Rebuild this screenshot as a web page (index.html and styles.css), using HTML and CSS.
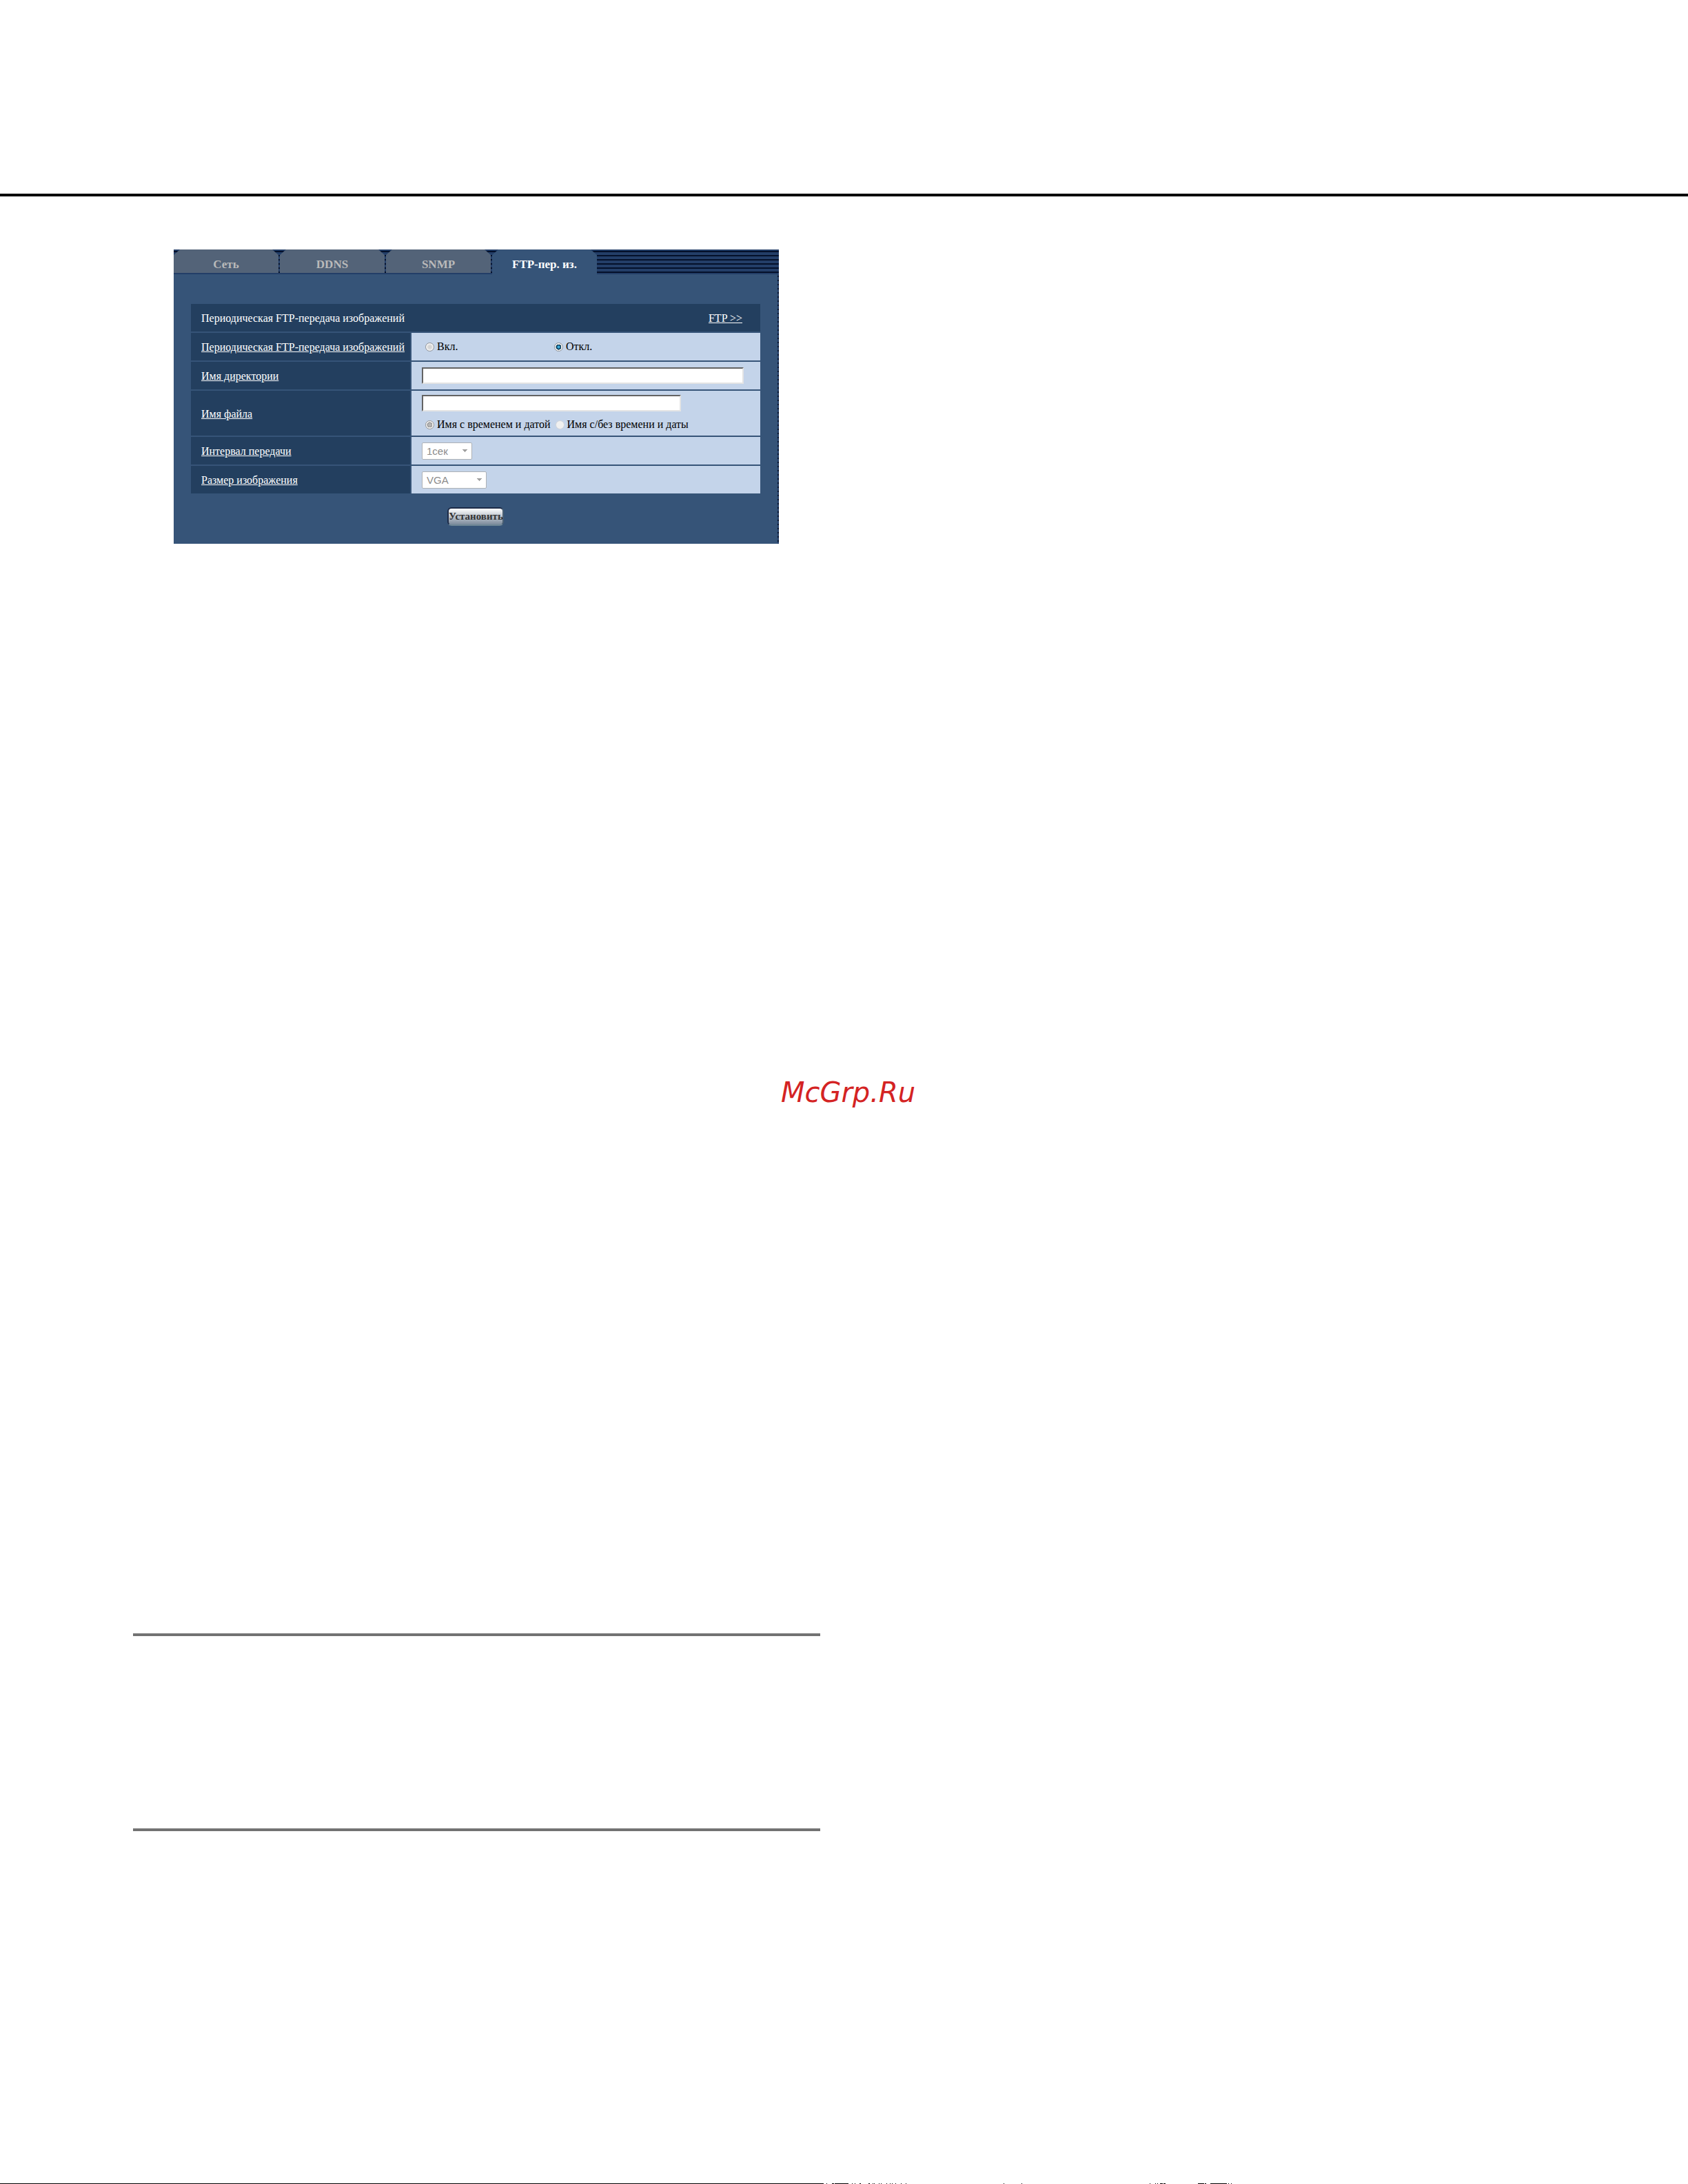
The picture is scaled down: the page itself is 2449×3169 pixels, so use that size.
FILE: index.html
```
<!DOCTYPE html>
<html lang="ru">
<head>
  <meta charset="UTF-8">
  <meta name="viewport" content="width=device-width, initial-scale=1.0">
  <title>FTP-пер. из.</title>
  <link rel="stylesheet" href="styles.css">
</head>
<body>
  <header class="page-head"></header>

  <main>
    <form class="panel">
      <nav class="tabs">
        <a class="tab" href="#net">Сеть</a>
        <a class="tab" href="#ddns">DDNS</a>
        <a class="tab" href="#snmp">SNMP</a>
        <a class="tab active" href="#ftp">FTP-пер. из.</a>
      </nav>

      <div class="panel-body">
        <table class="settings">
          <tr>
            <th colspan="2">
              <div class="caption">
                <span>Периодическая FTP-передача изображений</span>
                <a href="#ftp-setup">FTP &gt;&gt;</a>
              </div>
            </th>
          </tr>
          <tr>
            <th><a href="#help-ftp">Периодическая FTP-передача изображений</a></th>
            <td>
              <div class="radios wide">
                <label><input type="radio" name="ftp">Вкл.</label>
                <label><input type="radio" name="ftp" checked>Откл.</label>
              </div>
            </td>
          </tr>
          <tr>
            <th><a href="#help-dir">Имя директории</a></th>
            <td><input type="text" class="dir" aria-label="Имя директории"></td>
          </tr>
          <tr class="tall">
            <th><a href="#help-file">Имя файла</a></th>
            <td>
              <input type="text" class="file" aria-label="Имя файла">
              <div class="radios">
                <label><input type="radio" name="stamp" checked disabled>Имя с временем и датой</label>
                <label><input type="radio" name="stamp" disabled>Имя с/без времени и даты</label>
              </div>
            </td>
          </tr>
          <tr>
            <th><a href="#help-interval">Интервал передачи</a></th>
            <td><select class="interval" aria-label="Интервал передачи" disabled><option>1сек</option></select></td>
          </tr>
          <tr>
            <th><a href="#help-size">Размер изображения</a></th>
            <td><select class="size" aria-label="Размер изображения" disabled><option>VGA</option></select></td>
          </tr>
        </table>
        <button type="button" class="set">Установить</button>
      </div>
    </form>

    <p class="mark">McGrp.Ru</p>

    <section class="note"></section>
  </main>

  <footer class="page-foot">
    <svg width="1800" height="1" shape-rendering="crispEdges">
      <path stroke="#000" d="M0 .5H1195M1199 .5h1M1207 .5h3M1211 .5h20M1236 .5h1M1240 .5h1M1247 .5h2M1260 .5h2M1266 .5h1M1268 .5h1M1275 .5h1M1278 .5h1M1286 .5h1M1291 .5h1M1294 .5h1M1299 .5h1M1307 .5h1M1314 .5h1M1456 .5h1M1482 .5h1M1668 .5h1M1676 .5h1M1679 .5h1M1683 .5h4M1688 .5h3M1738 .5h9M1748 .5h2M1756 .5h24M1782 .5h1M1786 .5h1"/>
    </svg>
  </footer>
</body>
</html>
```
FILE: styles.css
```
* {
  box-sizing: border-box;
}
body {
  margin: 0;
  min-height: 100vh;
  display: flex;
  flex-direction: column;
  background: #fff;
  font: 16px/20px "Liberation Serif", "Times New Roman", serif;
}
.page-head {
  height: 285px;
  border-bottom: 4px solid #000;
}

/* settings panel, the stripes show behind the tabs and down the right edge */
.panel {
  width: 878px;
  max-width: 100%;
  margin: 77px 0 0 252px;
  padding-right: 2px;
  background: repeating-linear-gradient(#233e68 0 2px, #04102a 2px 4px, #233e68 4px 6px);
}
.tabs {
  display: flex;
  height: 36px;
  margin-right: -2px;
  border-bottom: 2px solid #233e68;
}
.tab {
  width: 152px;
  height: 34px;
  margin-right: 2px;
  background: #536378;
  clip-path: polygon(9px 0, 143px 0, 152px 8px, 152px 100%, 0 100%, 0 8px);
  color: #bababa;
  font-size: 17px;
  font-weight: bold;
  line-height: 44px;
  text-align: center;
  text-decoration: none;
}
.tab.active {
  height: 36px;
  background: #365478;
  color: #fff;
}
.panel-body {
  padding: 41px 23px 26px;
  background: #365478;
}
.settings {
  width: 100%;
  border-collapse: separate;
  border-spacing: 2px;
}
.settings th, .settings td {
  height: 40px;
  padding: 0 15px;
}
.settings th {
  width: 318px;
  padding: 2px 4px 0 15px;
  background: #233f5f;
  color: #fff;
  font-weight: normal;
  text-align: left;
  white-space: nowrap;
}
.settings td {
  background: #c4d4ea;
}
.settings .tall td {
  height: 65px;
}
.settings a {
  color: #fff;
}
.caption {
  display: flex;
  justify-content: space-between;
  padding-right: 22px;
}

input[type="text"] {
  display: block;
  height: 24px;
  border: 2px solid;
  border-color: #636363 #e4e4e4 #e4e4e4 #636363;
  background: #fff;
}
.dir {
  width: 467px;
}
.file {
  width: 376px;
}
.radios {
  display: flex;
  gap: 7px;
  padding-left: 5px;
}
.tall .radios {
  margin-top: 9px;
}
.radios label {
  display: flex;
  align-items: center;
  gap: 4px;
}
.radios.wide label {
  width: 180px;
}
input[type="radio"] {
  appearance: none;
  width: 13px;
  height: 13px;
  margin: 0;
  border: 1px solid #8e9298;
  border-radius: 50%;
  background: radial-gradient(circle, #d4d4d4 2px, #f4f4f4 5px);
}
input[type="radio"]:checked {
  background: radial-gradient(circle, #3fb4e4 1px, #12405f 3px, #12405f 4px, #f0f0f0 4px);
}
input[type="radio"]:disabled {
  border-color: #d0d4da;
  background: #f0f0f0;
}
input[type="radio"]:checked:disabled {
  border-color: #969696;
  background: radial-gradient(circle, #b4b4b4 2px, #8e8e8e 4px, #f0f0f0 4px);
}
select {
  appearance: none;
  display: block;
  height: 25px;
  padding: 0 6px;
  border: 1px solid #adb1b6;
  border-radius: 2px;
  background: conic-gradient(from -45deg at 50% 100%, #a0a0a0 90deg, #fff 0) right 5px center / 8px 4px no-repeat #fff;
  background: linear-gradient(to bottom left, #a0a0a0 50%, #fff 50%) right 5px center / 4px 4px no-repeat,
    linear-gradient(to bottom right, #a0a0a0 50%, #fff 50%) right 5px center / 4px 4px no-repeat #fff;
  background-position: right 9px center, right 5px center;
  color: #8c8c8c;
  font: 15px "Liberation Sans", Arial, sans-serif;
  opacity: 1;
}
.interval {
  width: 73px;
}
.size {
  width: 94px;
}
.set {
  display: block;
  width: 82px;
  height: 27px;
  margin: 18px auto 0;
  padding: 0;
  border: 2px solid #1d2b48;
  border-right-color: #4a6074;
  border-bottom-color: #6f8796;
  border-radius: 6px;
  background: linear-gradient(#fff, #c4cad2 45%, #7c8b9c);
  color: #333;
  font: bold 15px "Liberation Serif", "Times New Roman", serif;
  white-space: nowrap;
}

.mark {
  margin: 772px 0 0 12px;
  color: #d42323;
  font: italic 40px/48px "DejaVu Sans", Verdana, sans-serif;
  text-align: center;
}
.note {
  width: 997px;
  max-width: 100%;
  height: 287px;
  margin: 761px 0 0 193px;
  border: solid #727272;
  border-width: 4px 0;
}
.page-foot {
  height: 1px;
  margin-top: auto;
  overflow: hidden;
}
.page-foot svg {
  display: block;
}
```
